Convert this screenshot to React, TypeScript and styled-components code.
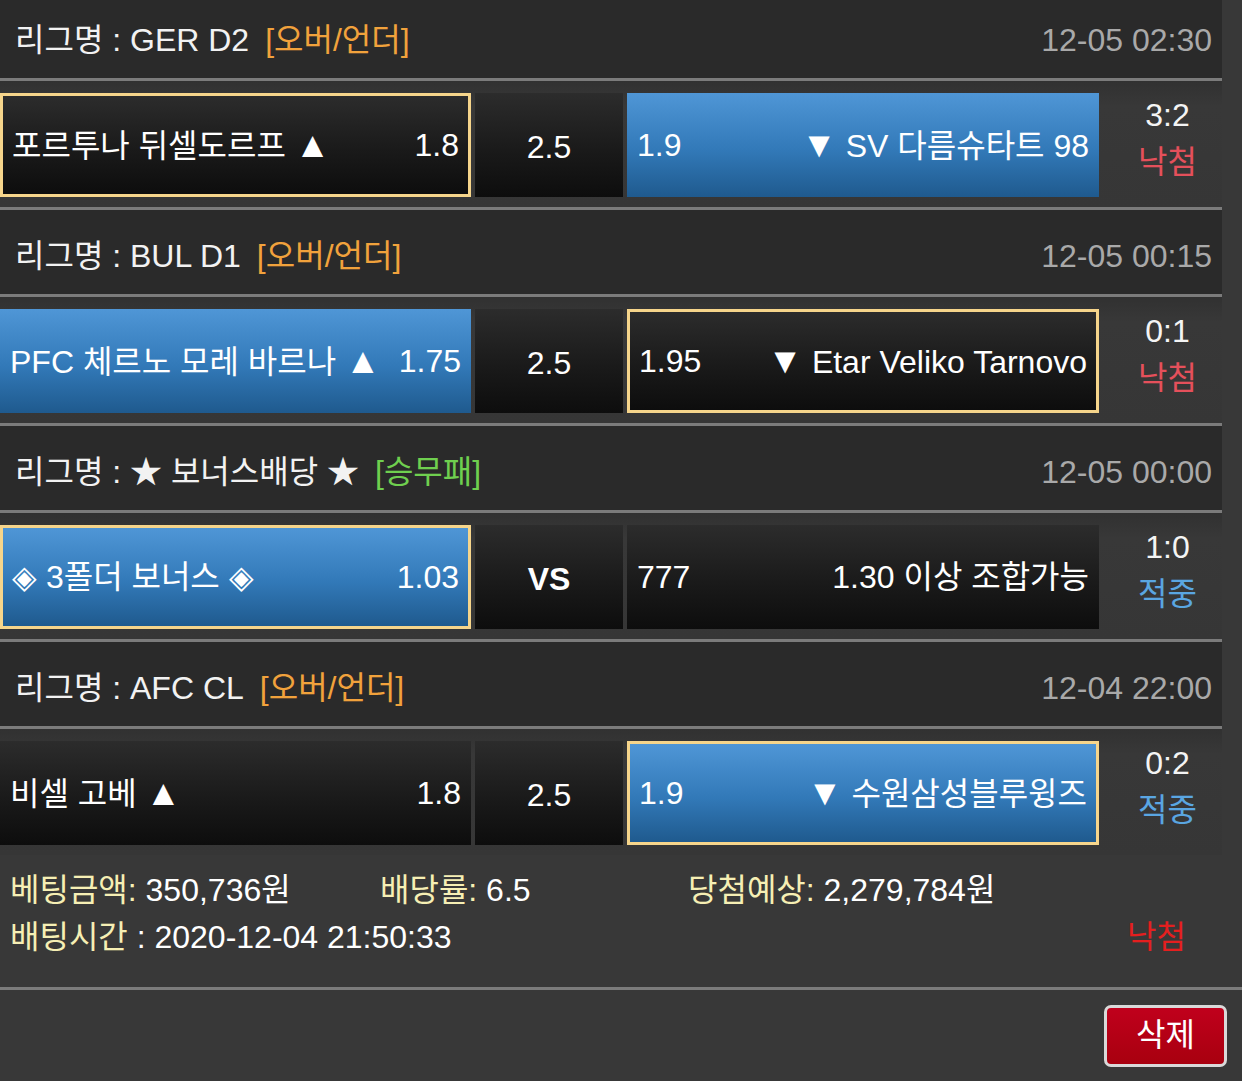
import * as React from 'react';
import styled, { createGlobalStyle } from 'styled-components';

const FontStack = `"Liberation Sans", "Noto Sans CJK KR", sans-serif`;

const GlobalStyle = createGlobalStyle`
    html, body {
        margin: 0;
        padding: 0;
        background: #383838;
    }
    body {
        font-family: ${FontStack};
        color: #f2f2f2;
    }
    * {
        box-sizing: border-box;
    }
`;

const Page = styled.div`
    width: 1242px;
    height: 1081px;
    overflow: hidden;
    background: #383838;
`;

// list is scrolled a few px, so the first header is cut at the top
const List = styled.div`
    width: 1222px;
    margin-top: -6px;
`;

const LeagueHeader = styled.div`
    height: 87px;
    padding: 7px 10px 0 15px;
    display: flex;
    align-items: center;
    background: #2a2a2a;
    border-bottom: 3px solid #7b7b7b;
    font-size: 32px;
    line-height: 40px;
`;

const LeagueName = styled.span`
    color: #f2f2f2;
`;

const BetType = styled.span<{ $color: string }>`
    margin-left: 16px;
    color: ${props => props.$color};
`;

const MatchDate = styled.span`
    margin-left: auto;
    color: #a9a9a9;
`;

const MatchRow = styled.div<{ $last?: boolean }>`
    height: ${props => props.$last ? 126 : 129}px;
    padding: 12px 0 10px;
    display: grid;
    grid-template-columns: 471px 148px 472px 1fr;
    column-gap: 4px;
    background: linear-gradient(#313131, #383838 20%, #363636);
    border-bottom: ${props => props.$last ? 'none' : '3px solid #7b7b7b'};
`;

const Cell = styled.div<{ $blue?: boolean; $picked?: boolean }>`
    height: 104px;
    display: flex;
    align-items: center;
    justify-content: space-between;
    font-size: 32px;
    line-height: 40px;
    color: #fff;
    white-space: nowrap;
    background: ${props => props.$blue
        ? 'linear-gradient(#4f96d6, #3279b8 55%, #1f5a8e)'
        : 'linear-gradient(#2c2c2c, #1a1a1a 55%, #0d0d0d)'};
    border: ${props => props.$picked ? '3px solid #f6d58b' : 'none'};
    padding-left: ${props => props.$picked ? 9 : 10}px;
    padding-right: ${props => props.$picked ? 9 : 10}px;
`;

const Arrow = styled.span`
    font-size: 36px;
`;

const MidCell = styled(Cell)<{ $bold?: boolean }>`
    justify-content: center;
    padding-top: 4px;
    font-weight: ${props => props.$bold ? 700 : 400};
`;

const ScoreCol = styled.div`
    height: 104px;
    padding-left: 10px;
    display: flex;
    flex-direction: column;
    align-items: center;
    font-size: 32px;
    line-height: 44px;
`;

const Score = styled.span`
    color: #f4f4f4;
`;

const Result = styled.span<{ $win?: boolean }>`
    margin-top: 3px;
    color: ${props => props.$win ? '#5aa6e2' : '#e5505b'};
`;

const Summary = styled.div`
    padding: 12px 56px 26px 10px;
    border-bottom: 3px solid #7b7b7b;
    font-size: 32px;
    line-height: 47px;
`;

const SummaryLine = styled.div`
    display: flex;
    align-items: center;
`;

const SummaryItem = styled.div<{ $width?: number }>`
    width: ${props => props.$width ? props.$width + 'px' : 'auto'};
    white-space: nowrap;
`;

const Label = styled.span`
    color: #f6efb4;
`;

const Value = styled.span`
    color: #fff;
`;

const FinalResult = styled.span`
    margin-left: auto;
    color: #e41f1f;
`;

const Actions = styled.div`
    display: flex;
    justify-content: flex-end;
    padding: 15px 15px 0 0;
`;

const DeleteBtn = styled.button`
    width: 123px;
    height: 62px;
    border: 3px solid #d9d9d9;
    border-radius: 7px;
    background: linear-gradient(#c0001c, #a8000f);
    color: #fff;
    font-family: ${FontStack};
    font-size: 32px;
    line-height: 1;
    padding: 0 0 2px;
    cursor: pointer;
`;

interface Side {
    name: string;
    odds: string;
    blue?: boolean;
    picked?: boolean;
}

interface Game {
    league: string;
    betType: string;
    typeColor: string;
    date: string;
    home: Side;
    mid: string;
    away: Side;
    score: string;
    result: string;
    win?: boolean;
}

const Orange = '#f1a23c';
const Green = '#6fcf4f';

const games: Game[] = [
    {
        league: 'GER D2', betType: '[오버/언더]', typeColor: Orange, date: '12-05 02:30',
        home: { name: '포르투나 뒤셀도르프', odds: '1.8', picked: true },
        mid: '2.5',
        away: { name: 'SV 다름슈타트 98', odds: '1.9', blue: true },
        score: '3:2', result: '낙첨',
    },
    {
        league: 'BUL D1', betType: '[오버/언더]', typeColor: Orange, date: '12-05 00:15',
        home: { name: 'PFC 체르노 모레 바르나', odds: '1.75', blue: true },
        mid: '2.5',
        away: { name: 'Etar Veliko Tarnovo', odds: '1.95', picked: true },
        score: '0:1', result: '낙첨',
    },
    {
        league: '★ 보너스배당 ★', betType: '[승무패]', typeColor: Green, date: '12-05 00:00',
        home: { name: '◈ 3폴더 보너스 ◈', odds: '1.03', blue: true, picked: true },
        mid: 'VS',
        away: { name: '1.30 이상 조합가능', odds: '777' },
        score: '1:0', result: '적중', win: true,
    },
    {
        league: 'AFC CL', betType: '[오버/언더]', typeColor: Orange, date: '12-04 22:00',
        home: { name: '비셀 고베', odds: '1.8' },
        mid: '2.5',
        away: { name: '수원삼성블루윙즈', odds: '1.9', blue: true, picked: true },
        score: '0:2', result: '적중', win: true,
    },
];

const App: React.FC = () => {
    return (
        <Page>
            <GlobalStyle />
            <List>
                {games.map((g, i) => {
                    // the bonus row has no over/under arrows
                    const ou = g.mid !== 'VS';
                    return (
                        <React.Fragment key={i}>
                            <LeagueHeader>
                                <LeagueName>리그명 : {g.league}</LeagueName>
                                <BetType $color={g.typeColor}>{g.betType}</BetType>
                                <MatchDate>{g.date}</MatchDate>
                            </LeagueHeader>
                            <MatchRow $last={i === games.length - 1}>
                                <Cell $blue={g.home.blue} $picked={g.home.picked}>
                                    <span>{g.home.name}{ou && <> <Arrow>▲</Arrow></>}</span>
                                    <span>{g.home.odds}</span>
                                </Cell>
                                <MidCell $bold={!ou}>{g.mid}</MidCell>
                                <Cell $blue={g.away.blue} $picked={g.away.picked}>
                                    <span>{g.away.odds}</span>
                                    <span>{ou && <><Arrow>▼</Arrow> </>}{g.away.name}</span>
                                </Cell>
                                <ScoreCol>
                                    <Score>{g.score}</Score>
                                    <Result $win={g.win}>{g.result}</Result>
                                </ScoreCol>
                            </MatchRow>
                        </React.Fragment>
                    );
                })}
            </List>

            <Summary>
                <SummaryLine>
                    <SummaryItem $width={370}>
                        <Label>베팅금액:</Label> <Value>350,736원</Value>
                    </SummaryItem>
                    <SummaryItem $width={308}>
                        <Label>배당률:</Label> <Value>6.5</Value>
                    </SummaryItem>
                    <SummaryItem>
                        <Label>당첨예상:</Label> <Value>2,279,784원</Value>
                    </SummaryItem>
                </SummaryLine>
                <SummaryLine>
                    <SummaryItem>
                        <Label>배팅시간</Label> <Value>: 2020-12-04 21:50:33</Value>
                    </SummaryItem>
                    <FinalResult>낙첨</FinalResult>
                </SummaryLine>
            </Summary>

            <Actions>
                <DeleteBtn>삭제</DeleteBtn>
            </Actions>
        </Page>
    );
};

export default App;
